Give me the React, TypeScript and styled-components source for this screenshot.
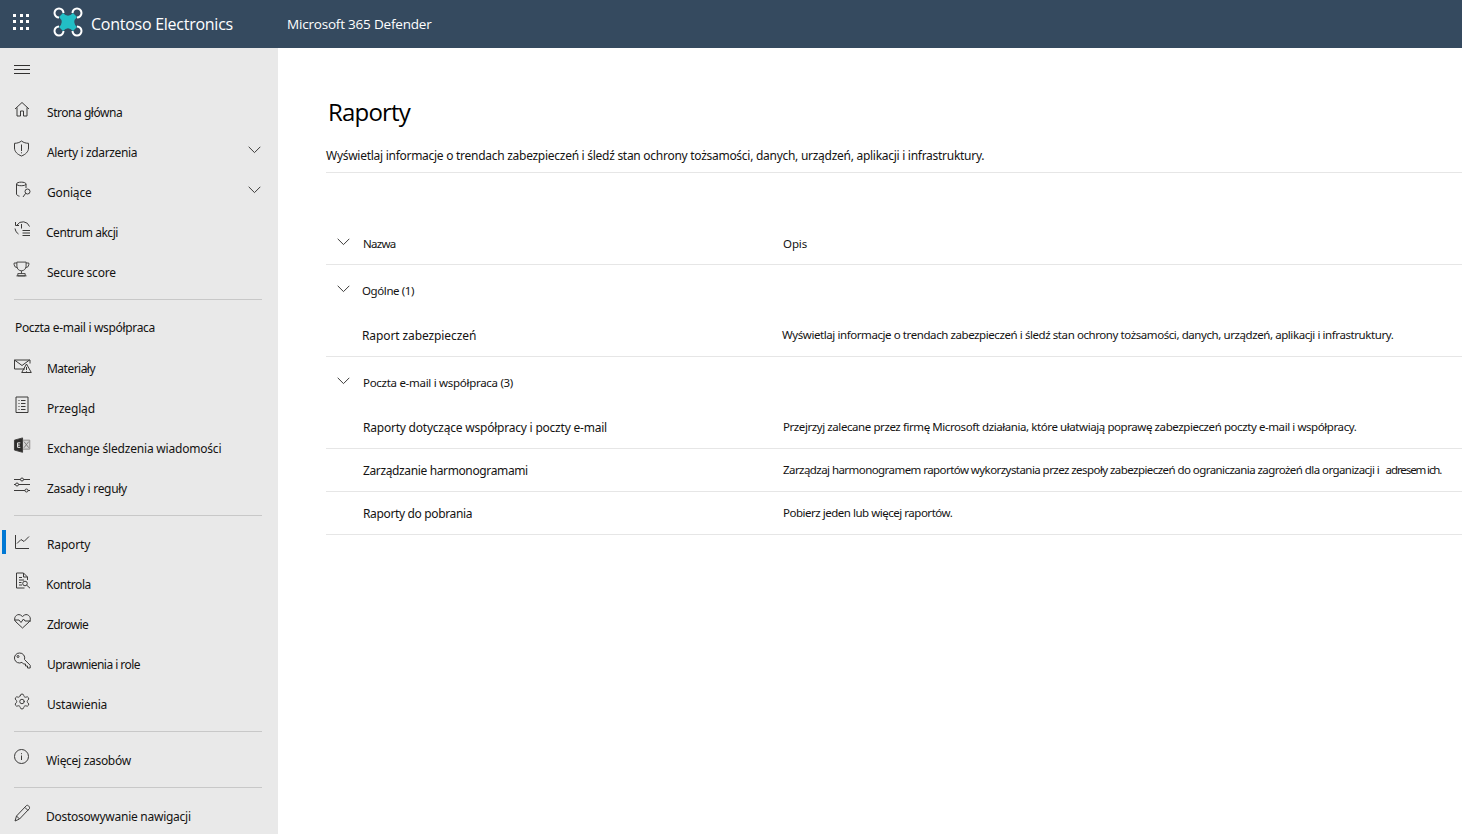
import * as React from 'react';
import styled, { createGlobalStyle } from 'styled-components';
import { Settings } from 'lucide-react';

const FONT = '"Noto Sans", "Open Sans", "Liberation Sans", sans-serif';

const GlobalStyle = createGlobalStyle`
  html, body {
    margin: 0;
    padding: 0;
    background: #ffffff;
    overflow: hidden;
  }
  * {
    box-sizing: border-box;
  }
`;

const Page = styled.div`
  width: 1462px;
  height: 834px;
  display: flex;
  flex-direction: column;
  overflow: hidden;
  font-family: ${FONT};
  color: #141312;
`;

const TopBar = styled.header`
  height: 48px;
  flex: none;
  display: flex;
  align-items: center;
  background: #354a5f;
  color: #ffffff;
`;

const Waffle = styled.div`
  width: 16px;
  margin: 0 0 5px 13px;
  display: grid;
  grid-template-columns: repeat(3, 3px);
  grid-auto-rows: 3px;
  gap: 3.5px;

  span {
    background: #ffffff;
  }
`;

const LogoWrap = styled.div`
  margin: 0 0 4px 24px;
  width: 30px;
  height: 30px;
  display: flex;
`;

const Brand = styled.div`
  margin-left: 8px;
  width: 196px;
  font-family: "Open Sans", sans-serif;
  font-size: 16px;
  letter-spacing: -0.26px;
`;

const Product = styled.div`
  font-family: "Open Sans", sans-serif;
  font-size: 13.5px;
  letter-spacing: -0.2px;
`;

const Body = styled.div`
  flex: 1;
  display: flex;
  min-height: 0;
`;

const Sidebar = styled.nav`
  width: 278px;
  flex: none;
  background: #e9e9e9;
  display: flex;
  flex-direction: column;
`;

const Hamburger = styled.div`
  height: 44px;
  flex: none;
  display: flex;
  align-items: center;
  padding: 0 0 0 14px;
  color: #323130;
`;

const NavRow = styled.div<{ $active?: boolean }>`
  position: relative;
  height: 40px;
  flex: none;
  display: flex;
  align-items: flex-start;
  padding-left: 14px;
  padding-right: 17px;

  ${(p) =>
    p.$active &&
    `
    &::before {
      content: "";
      position: absolute;
      left: 2px;
      top: 6px;
      width: 4px;
      height: 24px;
      background: #0078d4;
    }
  `}
`;

const NavIcon = styled.span`
  width: 18px;
  height: 18px;
  margin-top: 7px;
  flex: none;
  color: #3b3a39;
  display: flex;

  svg {
    overflow: visible;
  }
`;

const NavText = styled.span<{ $left?: number; $track?: number }>`
  margin-left: ${(p) => p.$left ?? 15}px;
  margin-top: 12px;
  flex: 1;
  font-size: 12px;
  line-height: 17px;
  letter-spacing: ${(p) => p.$track ?? -0.3}px;
  white-space: nowrap;
`;

const NavChevron = styled.span`
  margin-top: 14px;
  color: #3b3a39;
  display: flex;
`;

const NavDivider = styled.div`
  height: 1px;
  flex: none;
  margin: 7px 16px 8px 14px;
  background: #c8c8c8;
`;

const SectionLabel = styled.div`
  height: 40px;
  flex: none;
  padding: 11px 0 0 15px;
  font-size: 12px;
  line-height: 17px;
  letter-spacing: -0.33px;
`;

const Main = styled.main`
  flex: 1;
  min-width: 0;
  padding: 49px 0 0 48px;
`;

const Title = styled.h1`
  margin: -1px 0 1px 2px;
  font-family: "Open Sans", sans-serif;
  font-size: 24px;
  font-weight: 400;
  line-height: 32px;
  letter-spacing: -0.8px;
  color: #000000;
`;

const Lead = styled.p`
  margin: 0;
  padding: 18px 0 8px;
  height: 44px;
  font-size: 12px;
  line-height: 17px;
  letter-spacing: -0.275px;
  border-bottom: 1px solid #e6e6e6;
`;

const Table = styled.div`
  margin-top: 49px;
`;

const Row = styled.div<{ $height: number; $line?: boolean }>`
  height: ${(p) => p.$height}px;
  display: grid;
  grid-template-columns: 37px 420px 1fr;
  align-items: center;
  border-bottom: ${(p) => (p.$line ? '1px solid #e6e6e6' : 'none')};
  font-size: 12px;
  white-space: nowrap;
`;

const Chevron = styled.span`
  padding-left: 11px;
  margin-bottom: 2px;
  display: flex;
  color: #3b3a39;
`;

const Cell = styled.span<{ $track?: number; $left?: number; $size?: number; $lift?: number }>`
  font-size: ${(p) => p.$size ?? 12}px;
  letter-spacing: ${(p) => p.$track ?? -0.25}px;
  margin-left: ${(p) => p.$left ?? 0}px;
  margin-bottom: ${(p) => p.$lift ?? 0}px;
`;

const GroupCell = styled(Cell)`
  grid-column: 2 / 4;
`;

const Squeezed = styled.span`
  margin-left: 4px;
  letter-spacing: -1.1px;
`;

const Stroke = {
  fill: 'none',
  stroke: 'currentColor',
  strokeWidth: 1,
};

const Icon = ({ children, size = 18 }: { children: React.ReactNode; size?: number }) => (
  <svg width={size} height={size} viewBox="0 0 18 18" {...Stroke}>
    {children}
  </svg>
);

const ChevronIcon = () => (
  <svg width="13" height="8" viewBox="0 0 13 8" {...Stroke}>
    <path d="M.7.8l5.8 5.8L12.3.8" />
  </svg>
);

const RING = 'M6 10.500A4.500 4.500 0 1 1 10.500 6';

const Logo = () => (
  <svg width="30" height="30" viewBox="0 0 30 30">
    <path d="M10 6Q15 11.500 20 6L24 10Q18.500 15 24 20L20 24Q15 18.500 10 24L6 20Q11.500 15 6 10Z" fill="#22bfc6" />
    <g fill="none" stroke="#ffffff" strokeWidth="2">
      <path d={RING} />
      <path d={RING} transform="rotate(90 15 15)" />
      <path d={RING} transform="rotate(180 15 15)" />
      <path d={RING} transform="rotate(270 15 15)" />
    </g>
  </svg>
);

const icons: Record<string, React.ReactNode> = {
  home: <path d="M1 10l7-6.500 7 6.500M3 8.500v8.500h3.500v-5h3v5H13V8.500" />,
  shield: (
    <g transform="translate(0 1)">
      <path d="M7.500 1c2 1.600 4.500 2.300 7 2.300v4.700c0 3.800-3 6.400-7 8-4-1.600-7-4.200-7-8V3.300C3 3.300 5.500 2.600 7.500 1z" />
      <path d="M7.500 4.500v6.500M7.500 12.300v1" />
    </g>
  ),
  hunt: (
    <>
      <path d="M2.500 5c0-2.500 9.500-2.500 9.500 0M2.500 5c0 2.300 9.500 2.300 9.500 0M2.500 5v10c0 1 1.300 1.800 3 2.200M12 5v4" />
      <circle cx="13.500" cy="12.500" r="2.500" />
      <path d="M11.700 14.300L9 18" />
    </>
  ),
  action: (
    <g transform="translate(0 2)">
      <path d="M3 4a7 7 0 0 1 12.500 1.500M1 7.500a7 7 0 0 0 3.500 5.500M1.500 1v3.500H5" />
      <path d="M7.500 3v4.500M8.500 9.500H16M8.500 12H16M8.500 14.500H16" />
    </g>
  ),
  trophy: (
    <g transform="translate(-.8 1.700) scale(.92)">
      <path d="M4 1.500h10v4.500a5 5 0 0 1-10 0zM4 2.500H1v2a3.500 3.500 0 0 0 3.500 3M14 2.500h3v2a3.500 3.500 0 0 1-3.500 3" />
      <path d="M9 11v3M5 16.500v-2.500h8v2.500zM3.500 16.500h11" />
    </g>
  ),
  mail: (
    <g transform="translate(0 2.500)">
      <path d="M11 11.500H.5v-9h15.500V6M.5 2.500L8 8l7.500-5.500" />
      <path d="M12.500 6.500l4.800 8.500H7.700zM12.500 9.500v3M12.500 13.500v.7" />
    </g>
  ),
  review: (
    <path
      d="M2.500 2h12v15.500h-12zM5 5.500h1M7.500 5.500h4.500M5 8.500h1M7.500 8.500h4.500M5 11.500h1M7.500 11.500h4.500M5 14.500h1M7.500 14.500h4.500"
      transform="translate(-.5 0)"
    />
  ),
  exchange: (
    <g transform="translate(0 2) scale(.9)">
      <path d="M0.500 3.500L9.500 1v16l-9-2.500z" fill="#2d2c2b" />
      <path d="M4 6.500h3M4 9h2.500M4 11.500h3M4 6.500v5" stroke="#ffffff" />
      <path d="M10 3.500h7.500v10H10" stroke="#8a8886" fill="#d4d4d4" />
      <path d="M11 5l5.500 7M16.500 5L11 12" stroke="#7a7978" />
    </g>
  ),
  sliders: (
    <>
      <path d="M0 4.500h6.500M9.500 4.500H16M0 9.500h1.500M4.500 9.500H16M0 15.500h11M14 15.500h2" />
      <circle cx="8" cy="4.500" r="1.500" />
      <circle cx="3" cy="9.500" r="1.500" />
      <circle cx="12.500" cy="15.500" r="1.500" />
    </>
  ),
  chart: <path d="M1.500 4v13.500h13.500M3 12.500l4-4 3 2 5-5" />,
  audit: (
    <g transform="translate(0 1.500)">
      <path d="M10.500 15.500h-8V.5h7l4 4v3M9.500.5v4h4M5 5h3M5 7.500h5M5 10h2.500M5 12.500h3" />
      <circle cx="11" cy="11" r="2.300" />
      <path d="M12.700 12.700l3.300 3" />
    </g>
  ),
  health: (
    <path
      d="M9 15.500L2.500 9.500C-1 6 3 .5 7 2.500L9 4l2-1.500c4-2 8 3.500 4.500 7zM.5 7.500h5L7.500 10l2.500-3.500 1.500 2h6"
      transform="translate(-.5 1.500)"
    />
  ),
  key: (
    <g transform="translate(-.5 1)">
      <path d="M6 1a5 5 0 1 0 2.500 9.300l1.500 1.700h2v2h2v2h2.700v-2.700L11 7.500A5 5 0 0 0 6 1z" />
      <circle cx="4.500" cy="4.500" r="1" />
    </g>
  ),
  gear: <Settings x={-1} y={1.500} size={18} strokeWidth={1.3} />,
  info: (
    <g transform="translate(-.5 1.500)">
      <circle cx="8" cy="8" r="7" />
      <path d="M8 7v4.500M8 4.700v1" />
    </g>
  ),
  pencil: (
    <path d="M1 17l1.500-5L12.500 1.500c1-1 3.500 1 3 3L5.500 15zM2.500 12l3 3M11 3.500l3 3" transform="translate(0 1)" />
  ),
};

type NavItem = {
  icon: string;
  label: string;
  left?: number;
  track?: number;
  chevron?: boolean;
  active?: boolean;
};

const NavEntry = ({ item }: { item: NavItem }) => (
  <NavRow $active={item.active}>
    <NavIcon>
      <Icon>{icons[item.icon]}</Icon>
    </NavIcon>
    <NavText $left={item.left} $track={item.track}>
      {item.label}
    </NavText>
    {item.chevron && (
      <NavChevron>
        <ChevronIcon />
      </NavChevron>
    )}
  </NavRow>
);

const firstGroup: NavItem[] = [
  { icon: 'home', label: 'Strona główna', track: -0.46 },
  { icon: 'shield', label: 'Alerty i zdarzenia', track: -0.36, chevron: true },
  { icon: 'hunt', label: 'Goniące', track: -0.16, chevron: true },
  { icon: 'action', label: 'Centrum akcji', left: 14, track: -0.46 },
  { icon: 'trophy', label: 'Secure score', track: -0.22 },
];

const mailGroup: NavItem[] = [
  { icon: 'mail', label: 'Materiały', track: -0.52 },
  { icon: 'review', label: 'Przegląd', track: -0.17 },
  { icon: 'exchange', label: 'Exchange śledzenia wiadomości', track: -0.2 },
  { icon: 'sliders', label: 'Zasady i reguły' },
];

const thirdGroup: NavItem[] = [
  { icon: 'chart', label: 'Raporty', track: -0.16, active: true },
  { icon: 'audit', label: 'Kontrola', left: 14, track: -0.42 },
  { icon: 'health', label: 'Zdrowie', track: -0.58 },
  { icon: 'key', label: 'Uprawnienia i role', track: -0.54 },
  { icon: 'gear', label: 'Ustawienia', track: -0.2 },
];

export default function App(): JSX.Element {
  return (
    <Page>
      <GlobalStyle />
      <TopBar>
        <Waffle>
          {Array.from({ length: 9 }).map((_, i) => (
            <span key={i} />
          ))}
        </Waffle>
        <LogoWrap>
          <Logo />
        </LogoWrap>
        <Brand>Contoso Electronics</Brand>
        <Product>Microsoft 365 Defender</Product>
      </TopBar>
      <Body>
        <Sidebar>
          <Hamburger>
            <svg width="16" height="10" viewBox="0 0 16 10" {...Stroke}>
              <path d="M0 .5h16M0 4.500h16M0 8.500h16" />
            </svg>
          </Hamburger>
          {firstGroup.map((item) => (
            <NavEntry key={item.label} item={item} />
          ))}
          <NavDivider />
          <SectionLabel>Poczta e-mail i współpraca</SectionLabel>
          {mailGroup.map((item) => (
            <NavEntry key={item.label} item={item} />
          ))}
          <NavDivider />
          {thirdGroup.map((item) => (
            <NavEntry key={item.label} item={item} />
          ))}
          <NavDivider />
          <NavEntry item={{ icon: 'info', label: 'Więcej zasobów', left: 14 }} />
          <NavDivider />
          <NavEntry item={{ icon: 'pencil', label: 'Dostosowywanie nawigacji', left: 14, track: -0.26 }} />
        </Sidebar>
        <Main>
          <Title>Raporty</Title>
          <Lead>
            Wyświetlaj informacje o trendach zabezpieczeń i śledź stan ochrony tożsamości, danych, urządzeń,
            aplikacji i infrastruktury.
          </Lead>
          <Table>
            <Row $height={43} $line>
              <Chevron>
                <ChevronIcon />
              </Chevron>
              <Cell $size={11.5} $track={-0.7}>Nazwa</Cell>
              <Cell $size={11.5} $track={-0.1}>Opis</Cell>
            </Row>
            <Row $height={50}>
              <Chevron>
                <ChevronIcon />
              </Chevron>
              <GroupCell $left={-1} $size={11.5} $track={-0.4}>Ogólne (1)</GroupCell>
            </Row>
            <Row $height={42} $line>
              <span />
              <Cell $left={-1} $track={-0.1}>Raport zabezpieczeń</Cell>
              <Cell $left={-1} $size={11.5} $track={-0.42} $lift={2}>
                Wyświetlaj informacje o trendach zabezpieczeń i śledź stan ochrony tożsamości, danych, urządzeń,
                aplikacji i infrastruktury.
              </Cell>
            </Row>
            <Row $height={50}>
              <Chevron>
                <ChevronIcon />
              </Chevron>
              <GroupCell $size={11.5} $track={-0.29}>Poczta e-mail i współpraca (3)</GroupCell>
            </Row>
            <Row $height={42} $line>
              <span />
              <Cell $track={-0.22}>Raporty dotyczące współpracy i poczty e-mail</Cell>
              <Cell $size={11.5} $track={-0.42} $lift={2}>
                Przejrzyj zalecane przez firmę Microsoft działania, które ułatwiają poprawę zabezpieczeń poczty
                e-mail i współpracy.
              </Cell>
            </Row>
            <Row $height={43} $line>
              <span />
              <Cell $track={-0.37}>Zarządzanie harmonogramami</Cell>
              <Cell $size={11.5} $track={-0.56} $lift={2}>
                Zarządzaj harmonogramem raportów wykorzystania przez zespoły zabezpieczeń do ograniczania zagrożeń
                dla organizacji i <Squeezed>adresem ich.</Squeezed>
              </Cell>
            </Row>
            <Row $height={43} $line>
              <span />
              <Cell $track={-0.35}>Raporty do pobrania</Cell>
              <Cell $size={11.5} $track={-0.48} $lift={2}>Pobierz jeden lub więcej raportów.</Cell>
            </Row>
          </Table>
        </Main>
      </Body>
    </Page>
  );
}
